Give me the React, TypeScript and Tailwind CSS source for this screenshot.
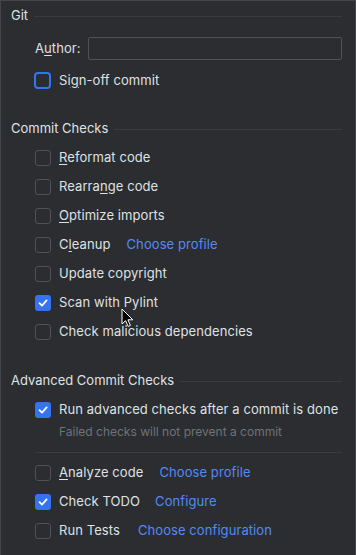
import type { ReactNode } from "react";

function Mn({ children }: { children: ReactNode }) {
  return <span className="underline underline-offset-2 decoration-1">{children}</span>;
}

function SectionTitle({ title }: { title: string }) {
  return (
    <div className="flex items-center gap-[6px] h-[18px]">
      <span className="text-[13px] text-[#dfe1e5] whitespace-nowrap">{title}</span>
      <div className="flex-1 h-px bg-[#393b40]" />
    </div>
  );
}

function Box({ checked, focused }: { checked?: boolean; focused?: boolean }) {
  if (checked) {
    return (
      <div className="w-4 h-4 shrink-0 rounded-[3px] bg-[#3574f0] flex items-center justify-center">
        <svg width="12" height="12" viewBox="0 0 12 12" fill="none">
          <path d="M2.5 6.2 L5 8.6 L9.6 3.4" stroke="white" strokeWidth="1.8" strokeLinecap="round" strokeLinejoin="round" />
        </svg>
      </div>
    );
  }
  if (focused) {
    return <div className="w-[17px] h-[17px] -ml-px shrink-0 rounded-[4px] border-2 border-[#3574f0]" />;
  }
  return <div className="w-4 h-4 shrink-0 rounded-[3px] border border-[#4e5157]" />;
}

function Row({
  label,
  checked,
  focused,
  link,
  linkGap = "ml-4",
  h = "h-[29px]",
}: {
  label: ReactNode;
  checked?: boolean;
  focused?: boolean;
  link?: string;
  linkGap?: string;
  h?: string;
}) {
  return (
    <div className={`flex items-center ${h}`}>
      <Box checked={checked} focused={focused} />
      <span className="ml-2 text-[13px] tracking-[0.08px] text-[#dfe1e5] whitespace-nowrap">{label}</span>
      {link && <span className={`${linkGap} text-[13px] tracking-[0.08px] text-[#548af7] whitespace-nowrap`}>{link}</span>}
    </div>
  );
}

export default function App() {
  return (
    <div
      className="relative w-[356px] h-[555px] bg-[#2b2d30] border-l border-r border-t border-[#43454a] pl-[10px] pr-[13px] pt-[6px] overflow-hidden"
      style={{ fontFamily: "Inter, 'Noto Sans', sans-serif" }}
    >
      <SectionTitle title="Git" />
      <div className="pl-6">
        <div className="flex items-center mt-3 h-[23px]">
          <span className="text-[13px] tracking-[0.08px] text-[#dfe1e5] w-[53px]">
            A<Mn>u</Mn>thor:
          </span>
          <div className="flex-1 h-[23px] border border-[#4e5157] rounded-[2px]" />
        </div>
        <div className="mt-[6px]">
          <Row focused label={<>Si<Mn>g</Mn>n-off commit</>} />
        </div>
      </div>

      <div className="mt-[25px]">
        <SectionTitle title="Commit Checks" />
      </div>
      <div className="pl-6 mt-[5px]">
        <Row label={<><Mn>R</Mn>eformat code</>} />
        <Row label={<>Rearra<Mn>n</Mn>ge code</>} />
        <Row label={<><Mn>O</Mn>ptimize imports</>} />
        <Row label={<>C<Mn>l</Mn>eanup</>} link="Choose profile" />
        <Row label="Update copyright" />
        <Row checked label="Scan with Pylint" />
        <Row label="Check malicious dependencies" />
      </div>

      <div className="mt-[26px]">
        <SectionTitle title="Advanced Commit Checks" />
      </div>
      <div className="pl-6 mt-[6px]">
        <Row checked h="h-[28px]" label="Run advanced checks after a commit is done" />
        <div className="pl-6 text-[12px] leading-4 text-[#6f737a]">Failed checks will not prevent a commit</div>
        <div className="mt-[12px] h-px bg-[#393b40]" />
        <div className="mt-[5px]">
          <Row label={<><Mn>A</Mn>nalyze code</>} link="Choose profile" />
          <Row checked label="Check TODO" link="Configure" linkGap="ml-[15px]" />
          <Row label="Run Tests" link="Choose configuration" linkGap="ml-[18px]" />
        </div>
      </div>

      <svg className="absolute left-[120px] top-[307px]" width="13" height="20" viewBox="0 0 13 20">
        <path d="M1 1 L1 16 L4.6 12.6 L7.2 18.4 L9.4 17.4 L6.9 11.8 L11.8 11.8 Z" fill="black" stroke="white" strokeWidth="1" strokeLinejoin="round" />
      </svg>
    </div>
  );
}
